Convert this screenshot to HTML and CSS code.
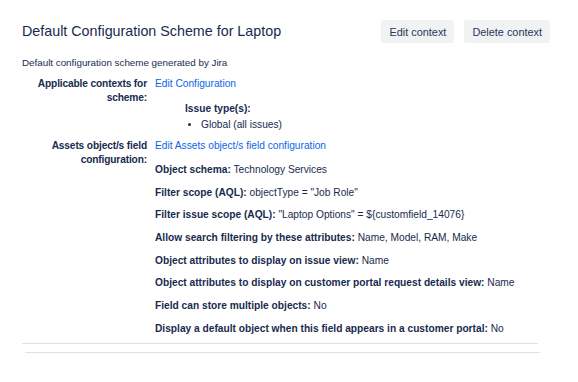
FILE: index.html
```html
<!DOCTYPE html>
<html>
<head>
<meta charset="utf-8">
<link rel="stylesheet" href="styles.css">
</head>
<body>
<div class="page">
  <div class="header">
    <h1 class="title">Default Configuration Scheme for Laptop</h1>
    <div class="actions">
      <button class="btn">Edit context</button>
      <button class="btn">Delete context</button>
    </div>
  </div>
  <p class="desc">Default configuration scheme generated by Jira</p>
  <div class="row">
    <div class="label">Applicable contexts for scheme:</div>
    <div class="value">
      <a class="link">Edit Configuration</a>
      <div class="issue-types">
        <div class="it-title">Issue type(s):</div>
        <ul class="it-list"><li>Global (all issues)</li></ul>
      </div>
    </div>
  </div>
  <div class="row row2">
    <div class="label">Assets object/s field configuration:</div>
    <div class="value">
      <a class="link">Edit Assets object/s field configuration</a>
      <div class="props">
        <div class="prop"><b>Object schema:</b> Technology Services</div>
        <div class="prop"><b>Filter scope (AQL):</b> objectType = "Job Role"</div>
        <div class="prop"><b>Filter issue scope (AQL):</b> "Laptop Options" = ${customfield_14076}</div>
        <div class="prop"><b>Allow search filtering by these attributes:</b> Name, Model, RAM, Make</div>
        <div class="prop"><b>Object attributes to display on issue view:</b> Name</div>
        <div class="prop"><b>Object attributes to display on customer portal request details view:</b> Name</div>
        <div class="prop"><b>Field can store multiple objects:</b> No</div>
        <div class="prop"><b>Display a default object when this field appears in a customer portal:</b> No</div>
      </div>
    </div>
  </div>
  <div class="rule rule1"></div>
  <div class="rule rule2"></div>
</div>
</body>
</html>
```

FILE: styles.css
```css
html, body {
  margin: 0;
  padding: 0;
  background: #ffffff;
}
body {
  font-family: "Liberation Sans", Arial, sans-serif;
  font-size: 10.2px;
  color: #172b4d;
}
.page {
  padding: 20px 28px 0 22px;
}
.header {
  display: flex;
  justify-content: space-between;
  align-items: flex-start;
}
.title {
  margin: 1px 0 0 0;
  font-size: 14.3px;
  font-weight: 400;
  line-height: 20px;
  color: #172b4d;
}
.actions {
  display: flex;
  gap: 10px;
}
.btn {
  font-family: inherit;
  font-size: 10.9px;
  color: #253858;
  background: #f1f2f4;
  border: none;
  border-radius: 3px;
  height: 23px;
  padding: 0 8px;
}
.desc {
  margin: 13px 0 0 0;
  font-size: 9.8px;
  line-height: 14px;
}
.row {
  display: grid;
  grid-template-columns: 125px 1fr;
  column-gap: 8px;
  margin-top: 7px;
}
.row2 {
  margin-top: 7px;
}
.label {
  text-align: right;
  font-weight: 700;
  line-height: 14px;
  letter-spacing: -0.15px;
}
.value {
  line-height: 14px;
}
.link {
  color: #0c66e4;
  text-decoration: none;
}
.issue-types {
  margin: 11px 0 0 30px;
}
.it-title {
  font-weight: 700;
}
.it-list {
  margin: 2px 0 0 0;
  padding-left: 16px;
}
.props {
  margin-top: 10px;
}
.prop {
  line-height: 14px;
  margin-bottom: 8.7px;
}
.rule {
  height: 1px;
  background: #dfe1e6;
}
.rule1 {
  margin-top: -2px;
  width: 516px;
}
.rule2 {
  margin-top: 8px;
  margin-left: 3px;
  width: 515px;
}
```
